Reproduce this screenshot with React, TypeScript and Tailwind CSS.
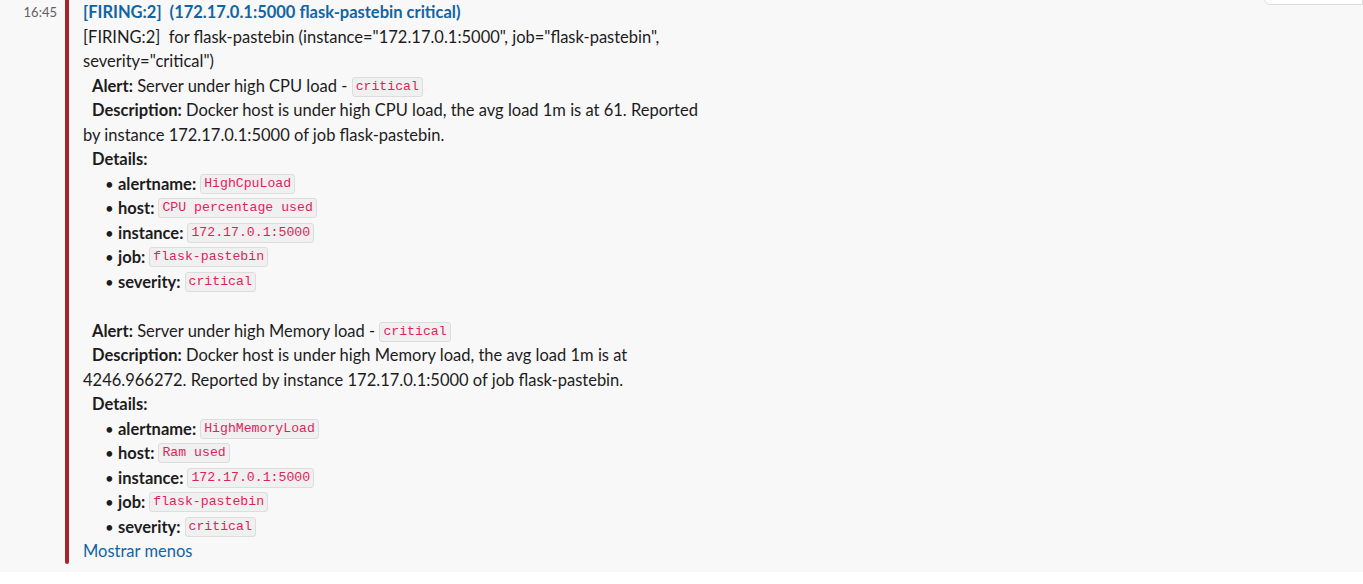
import React from 'react';

type Detail = { label: string; value: string };

const CPU_DETAILS: Detail[] = [
  { label: 'alertname', value: 'HighCpuLoad' },
  { label: 'host', value: 'CPU percentage used' },
  { label: 'instance', value: '172.17.0.1:5000' },
  { label: 'job', value: 'flask-pastebin' },
  { label: 'severity', value: 'critical' },
];

const MEM_DETAILS: Detail[] = [
  { label: 'alertname', value: 'HighMemoryLoad' },
  { label: 'host', value: 'Ram used' },
  { label: 'instance', value: '172.17.0.1:5000' },
  { label: 'job', value: 'flask-pastebin' },
  { label: 'severity', value: 'critical' },
];

function Code({ children }: { children: React.ReactNode }) {
  return (
    <code className="inline-block rounded-[3px] border border-[#dddddd] bg-[#f0f0f0] px-[3px] py-[1px] align-middle font-['Liberation_Mono',monospace] text-[13.2px] leading-[16px] text-[#e01e5a]">
      {children}
    </code>
  );
}

function Alert({ name, description, details }: { name: string; description: string; details: Detail[] }) {
  return (
    <>
      <div className="pl-[9px]">
        <b>Alert:</b> {name} - <Code>critical</Code>
      </div>
      <div>
        <span className="inline-block w-[9px]" />
        <b>Description:</b> {description}
      </div>
      <div className="pl-[9px] font-bold">Details:</div>
      <ul>
        {details.map((d) => (
          <li key={d.label} className="flex items-center pl-[22px]">
            <span className="w-[13px] text-[15px]">•</span>
            <b className="mr-[4px]">{d.label}:</b>
            <Code>{d.value}</Code>
          </li>
        ))}
      </ul>
    </>
  );
}

export default function App() {
  return (
    <div className="relative min-h-[584px] bg-white font-['Lato',sans-serif] text-[#1d1c1d]">
      <div className="flex h-[572px] bg-[#f8f8f8]">
        <div className="w-[57px] pt-[4px] text-right text-[13px] leading-[16px] text-[#616061]">16:45</div>
        <div className="ml-[8px] flex w-[643px]">
          <div className="h-[564px] w-[4px] rounded-b-[4px] bg-[#a4262c]" />
          <div className="ml-[14px] flex-1 text-[16.5px] leading-[24.5px]">
            <div className="font-bold text-[#1264a3]">[FIRING:2]&nbsp; (172.17.0.1:5000 flask-pastebin critical)</div>
            <div>
              [FIRING:2]&nbsp; for flask-pastebin (instance="172.17.0.1:5000", job="flask-pastebin", severity="critical")
            </div>
            <Alert
              name="Server under high CPU load"
              description="Docker host is under high CPU load, the avg load 1m is at 61. Reported by instance 172.17.0.1:5000 of job flask-pastebin."
              details={CPU_DETAILS}
            />
            <div className="h-[24.5px]" />
            <Alert
              name="Server under high Memory load"
              description="Docker host is under high Memory load, the avg load 1m is at 4246.966272. Reported by instance 172.17.0.1:5000 of job flask-pastebin."
              details={MEM_DETAILS}
            />
            <div className="text-[#1264a3]">Mostrar menos</div>
          </div>
        </div>
      </div>
      <div className="absolute right-0 top-[-10px] h-[15px] w-[99px] rounded-bl-[6px] border border-[#dddddd] bg-white" />
    </div>
  );
}
